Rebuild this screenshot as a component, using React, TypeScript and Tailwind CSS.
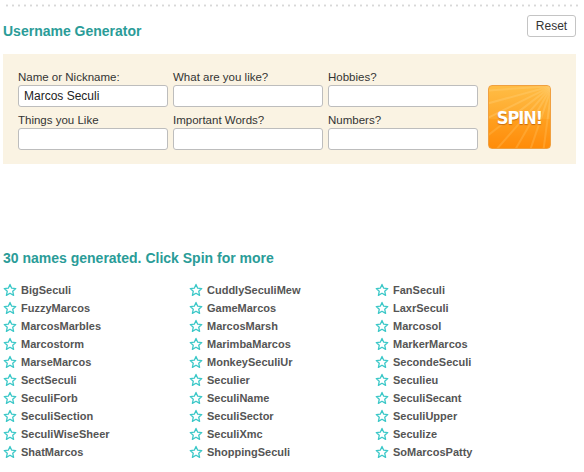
const names = [
  ["BigSeculi", "CuddlySeculiMew", "FanSeculi"],
  ["FuzzyMarcos", "GameMarcos", "LaxrSeculi"],
  ["MarcosMarbles", "MarcosMarsh", "Marcosol"],
  ["Marcostorm", "MarimbaMarcos", "MarkerMarcos"],
  ["MarseMarcos", "MonkeySeculiUr", "SecondeSeculi"],
  ["SectSeculi", "Seculier", "Seculieu"],
  ["SeculiForb", "SeculiName", "SeculiSecant"],
  ["SeculiSection", "SeculiSector", "SeculiUpper"],
  ["SeculiWiseSheer", "SeculiXmc", "Seculize"],
  ["ShatMarcos", "ShoppingSeculi", "SoMarcosPatty"],
];

function Star() {
  return (
    <svg width="14" height="14" viewBox="0 0 24 24" className="shrink-0">
      <path
        d="M12 2.5l2.9 6.4 7 .7-5.2 4.7 1.5 6.9L12 17.6l-6.2 3.6 1.5-6.9L2.1 9.6l7-.7z"
        fill="none"
        stroke="#3cc8c8"
        strokeWidth="2.2"
        strokeLinejoin="round"
      />
    </svg>
  );
}

function Field({ label, value }: { label: string; value?: string }) {
  return (
    <div className="flex flex-col w-[150px]">
      <label className="text-[11.5px] leading-[14px] text-[#333] mb-[1px]">{label}</label>
      <input
        readOnly
        value={value ?? ""}
        className="h-[22px] w-[150px] rounded-[3px] border border-[#bdbdbd] bg-white px-[5px] text-[12px] text-[#222] outline-none"
      />
    </div>
  );
}

function SpinButton() {
  const rays = Array.from({ length: 14 }, (_, i) => -10 + i * 7);
  return (
    <div className="relative ml-[10px] mt-[15px] h-[64px] w-[63px] overflow-hidden rounded-[4px] border border-[#f0a040] bg-gradient-to-b from-[#ffbd45] via-[#ffa82a] to-[#ff8c0a]">
      <svg className="absolute inset-0" width="63" height="64" viewBox="0 0 63 64">
        {rays.map((a, i) => {
          const rad = ((200 + a * 1.6) * Math.PI) / 180;
          return (
            <line
              key={i}
              x1="63"
              y1="0"
              x2={63 + Math.cos(rad) * 120}
              y2={-Math.sin(rad) * 120}
              stroke="#ffd27a"
              strokeOpacity="0.35"
              strokeWidth="2"
            />
          );
        })}
        <rect x="0" y="33" width="63" height="31" fill="#ff8a00" fillOpacity="0.25" />
      </svg>
      <div className="relative flex h-full items-center justify-center text-[18px] font-bold tracking-[-1px] text-white [font-family:'DejaVu_Sans_Condensed',sans-serif] [text-shadow:0_1px_1px_rgba(160,70,0,0.6)]">
        SPIN!
      </div>
    </div>
  );
}

export default function App() {
  return (
    <div className="w-[584px] h-[472px] overflow-hidden bg-white [font-family:'Liberation_Sans',Arial,sans-serif]">
      <div className="mx-[4px] mt-[4px] h-[3px] bg-[radial-gradient(circle,#d8d8d8_1px,transparent_1.2px)] bg-[length:6px_3px]" />
      <div className="flex items-start justify-between pl-[3px] pr-[8px] pt-[8px]">
        <h1 className="mt-[6px] text-[14px] font-bold text-[#2a9c98]">Username Generator</h1>
        <button className="h-[22px] w-[49px] rounded-[3px] border border-[#c4c4c4] bg-white text-[12px] text-[#333]">
          Reset
        </button>
      </div>
      <div className="mx-[3px] mt-[12px] flex h-[110px] w-[573px] bg-[#faf3e3] pl-[15px] pt-[16px]">
        <div className="flex flex-col gap-[6px]">
          <div className="flex gap-[5px]">
            <Field label="Name or Nickname:" value="Marcos Seculi" />
            <Field label="What are you like?" />
            <Field label="Hobbies?" />
          </div>
          <div className="flex gap-[5px]">
            <Field label="Things you Like" />
            <Field label="Important Words?" />
            <Field label="Numbers?" />
          </div>
        </div>
        <SpinButton />
      </div>
      <h2 className="mt-[84px] pl-[3px] text-[14px] font-bold text-[#2a9c98]">
        30 names generated. Click Spin for more
      </h2>
      <div className="mt-[12px] grid grid-cols-[186px_186px_186px] pl-[3px]">
        {names.map((row, r) =>
          row.map((n, c) => (
            <div key={r + "-" + c} className="flex h-[18px] items-center gap-[4px]">
              <Star />
              <span className="text-[11px] font-bold text-[#555]">{n}</span>
            </div>
          ))
        )}
      </div>
    </div>
  );
}
